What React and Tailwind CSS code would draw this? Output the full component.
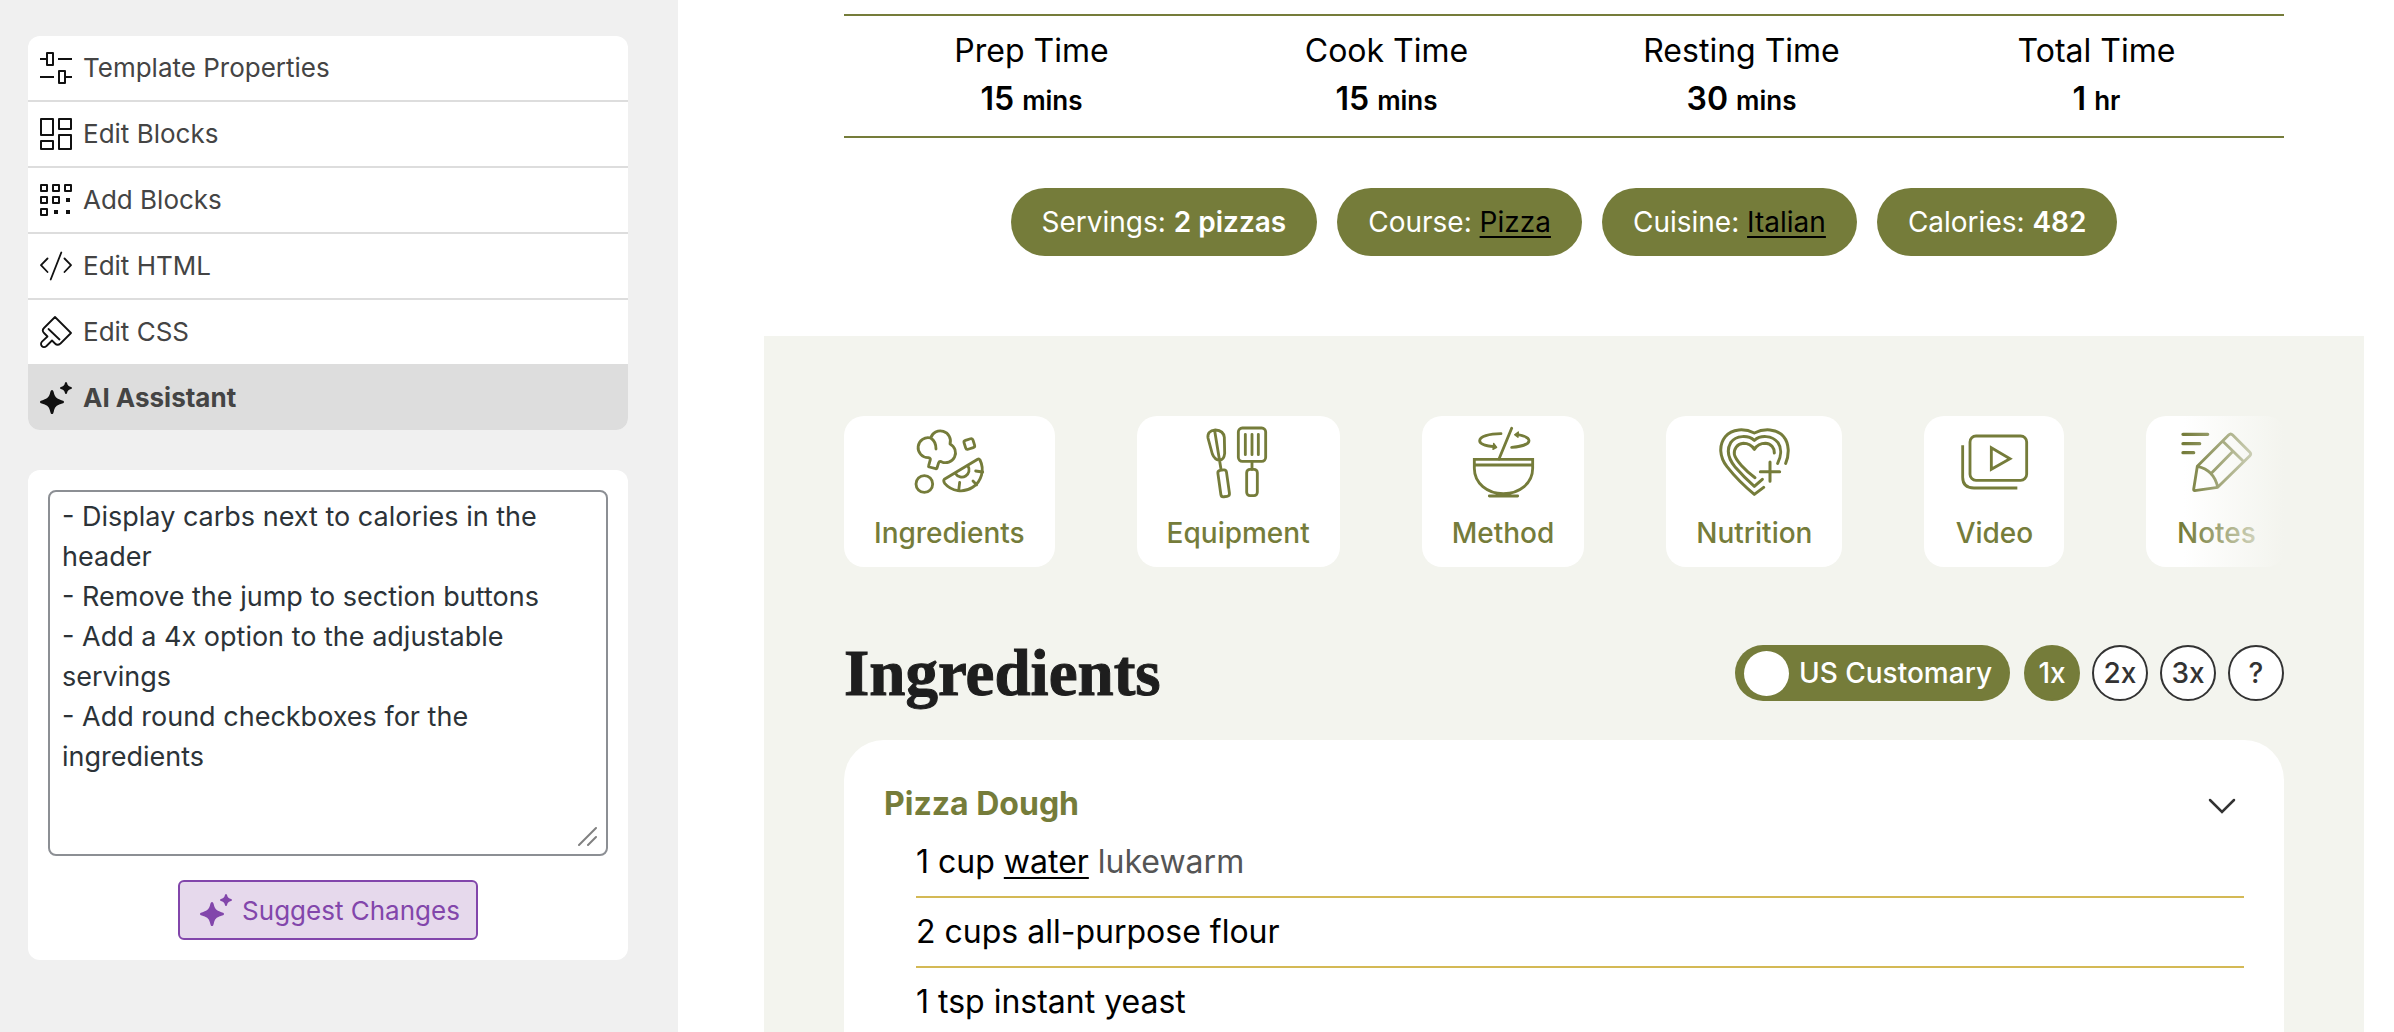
import React, { useState } from 'react';

const SparkleIcon = () => (
  <svg className="h-8 w-8 shrink-0" viewBox="0 0 32 32" fill="currentColor" aria-hidden="true">
    <path d="M12 8c1 0 1.4 1 1.8 2.600c1 4.200 2.400 6 7 7.400c2 .5 3.200 1 3.200 2s-1.200 1.500-3.200 2c-4.600 1.400-6 3.200-7 7.400c-.4 1.600-.8 2.600-1.800 2.600s-1.400-1-1.800-2.600c-1-4.200-2.400-6-7-7.400c-2-.5-3.200-1-3.200-2s1.200-1.500 3.200-2c4.600-1.400 6-3.200 7-7.400C10.600 9 11 8 12 8z" />
    <path d="M26 0c.7 0 1 .8 1.200 1.600c.5 1.800 1.200 2.600 3.200 3.200c.8.2 1.600.5 1.600 1.200s-.8 1-1.600 1.200c-2 .6-2.700 1.400-3.200 3.200c-.2.8-.5 1.600-1.200 1.600s-1-.8-1.200-1.600c-.5-1.800-1.200-2.600-3.200-3.200c-.8-.2-1.600-.5-1.600-1.200s.8-1 1.600-1.200c2-.6 2.700-1.400 3.200-3.200C25 .8 25.300 0 26 0z" />
  </svg>
);

const MenuIcon = ({ children }) => (
  <svg
    className="h-8 w-8 shrink-0"
    viewBox="0 0 32 32"
    fill="none"
    stroke="currentColor"
    strokeWidth="2"
    strokeLinejoin="round"
    aria-hidden="true"
  >
    {children}
  </svg>
);

const menuItems = [
  {
    label: 'Template Properties',
    icon: (
      <MenuIcon>
        <rect x="7" y="1" width="6" height="12" />
        <rect x="19" y="19" width="6" height="12" />
        <path d="M0 7h6M18 7h14M0 25h14M26 25h6" />
      </MenuIcon>
    ),
  },
  {
    label: 'Edit Blocks',
    icon: (
      <MenuIcon>
        <rect x="1" y="1" width="12" height="16" />
        <rect x="19" y="1" width="12" height="10" />
        <rect x="1" y="23" width="12" height="8" />
        <rect x="19" y="17" width="12" height="14" />
      </MenuIcon>
    ),
  },
  {
    label: 'Add Blocks',
    icon: (
      <MenuIcon>
        <path d="M1 1h6v6H1zM13 1h6v6h-6zM25 1h6v6h-6zM1 13h6v6H1zM13 13h6v6h-6zM1 25h6v6H1z" />
        <path d="M26 14h4v4h-4zM14 26h4v4h-4zM26 26h4v4h-4z" fill="currentColor" stroke="none" />
      </MenuIcon>
    ),
  },
  {
    label: 'Edit HTML',
    icon: (
      <MenuIcon>
        <path d="M21.300 2.500L10.700 29.500M7.500 8.500L1 15.200L7.500 22M24.500 8.500L31 15.200L24.500 22" strokeWidth="1.800" strokeLinecap="round" />
      </MenuIcon>
    ),
  },
  {
    label: 'Edit CSS',
    icon: (
      <MenuIcon>
        <path
          d="M15 1L31 17L20.500 27.500Q17.500 30 15 27.500L12 24.500L6.500 30Q4 32 2 30.300Q0 28 2 25.700L7.500 20.500L4 17Q1.500 14.500 4 12z M8.500 13L19.500 23.500"
          strokeWidth="1.800"
          strokeLinecap="round"
        />
      </MenuIcon>
    ),
  },
  { label: 'AI Assistant', icon: <SparkleIcon /> },
];

const times = [
  { label: 'Prep Time', value: '15', unit: 'mins' },
  { label: 'Cook Time', value: '15', unit: 'mins' },
  { label: 'Resting Time', value: '30', unit: 'mins' },
  { label: 'Total Time', value: '1', unit: 'hr' },
];

const tags = [
  { label: 'Servings:', value: '2 pizzas' },
  { label: 'Course:', value: 'Pizza', link: true },
  { label: 'Cuisine:', value: 'Italian', link: true },
  { label: 'Calories:', value: '482' },
];

const JumpIcon = ({ viewBox, children }) => (
  <svg
    className="h-20 w-20"
    viewBox={viewBox}
    fill="none"
    stroke="currentColor"
    strokeWidth="8.500"
    strokeLinecap="round"
    strokeLinejoin="round"
    aria-hidden="true"
  >
    {children}
  </svg>
);

const sections = [
  {
    label: 'Ingredients',
    icon: (
      <JumpIcon viewBox="30 9 240 240">
        <path d="M88 113A30 30 0 1 1 95 54A29 29 0 0 1 153 72A29 29 0 1 1 127 125q-6-2-8 3l-5 16q-1 3-4 2l-19-5q-3-1-2-4l5-18q1-4-6-6M95 54Q111 64 111 87" />
        <rect x="197" y="58" width="28" height="28" rx="6" transform="rotate(-17 211 72)" />
        <circle cx="76" cy="192" r="25" />
        <path d="M136 178L236 118q5-3 7 2A64 64 0 0 1 137 190q-5-8-1-12z" />
        <path d="M170 161A20 20 0 0 0 207 138M182 187L179 212M222 183L233 194M230 153L251 156" />
      </JumpIcon>
    ),
  },
  {
    label: 'Equipment',
    icon: (
      <JumpIcon viewBox="898 9 240 240">
        <path d="M928 54Q925 32 950 30Q975 32 977 52L978 100Q976 120 962 121Q948 119 941 102ZM948 32L967 148" />
        <rect x="962" y="150" width="26" height="80" rx="8" transform="rotate(-8 975 190)" />
        <rect x="1019" y="24" width="82" height="100" rx="12" />
        <path d="M1040 43V104M1060 43V104M1079 43V104M1060 124V148" />
        <rect x="1044" y="148" width="32" height="79" rx="10" />
      </JumpIcon>
    ),
  },
  {
    label: 'Method',
    icon: (
      <JumpIcon viewBox="42 9 240 240">
        <path d="M76 118H251V145C251 190 212 221 163 221C115 221 76 190 76 145ZM76 135H251M121 228H206" strokeLinejoin="miter" />
        <path d="M188 25L150 117M156 41C120 41 92 50 92 62C92 73 115 78 136 80M188 82C215 80 240 73 240 62C240 52 224 47 206 44" />
        <path d="M134 70L143 82L132 88zM197 44L208 36L207 52z" fill="currentColor" strokeWidth="4" />
      </JumpIcon>
    ),
  },
  {
    label: 'Nutrition',
    icon: (
      <JumpIcon viewBox="796 9 240 240">
        <path d="M1011 130C1022 105 1022 70 1005 50C985 25 945 25 917 39C889 25 850 25 830 50C810 75 812 110 835 140C860 172 895 205 917 223L945 202" strokeWidth="9" />
        <path d="M987 130C997 110 1000 85 988 68C970 45 935 45 917 61C899 45 862 45 846 68C832 92 838 115 860 142C878 163 900 184 917 199L941 178" strokeWidth="9" />
        <path d="M977 99C978 85 968 71 950 70C935 70 925 76 917 88C909 76 899 70 884 70C865 71 855 88 857 103C860 120 890 152 919 173" strokeWidth="9" />
        <path d="M964 126V184M935 155H993" strokeWidth="9" />
      </JumpIcon>
    ),
  },
  {
    label: 'Video',
    icon: (
      <JumpIcon viewBox="42 9 240 240">
        <rect x="90" y="48" width="170" height="133" rx="18" />
        <path d="M68 76V172Q68 204 102 204H232M154 83V148L210 116Z" strokeLinecap="butt" strokeLinejoin="miter" />
      </JumpIcon>
    ),
  },
  {
    label: 'Notes',
    icon: (
      <JumpIcon viewBox="700 9 240 240">
        <path d="M721 43H795M721 71H771M721 98H753" strokeWidth="10" />
        <path d="M764 139L858 45q6-6 12 0L921 96q6 6 0 12L825 202L756 212q-3 0-3-4ZM842 65L902 124M868 97L806 160M764 139Q815 150 825 202" />
      </JumpIcon>
    ),
  },
];

const servings = ['1x', '2x', '3x', '?'];

const Sidebar = () => {
  const [active, setActive] = useState('AI Assistant');
  const [prompt, setPrompt] = useState(
    '- Display carbs next to calories in the header\n- Remove the jump to section buttons\n- Add a 4x option to the adjustable servings\n- Add round checkboxes for the ingredients'
  );

  return (
    <aside className="w-[678px] shrink-0 bg-[#f0f0f0] pt-9 pr-[50px] pl-7">
      <nav className="overflow-hidden rounded-xl bg-white">
        {menuItems.map((item, i) => (
          <button
            key={item.label}
            type="button"
            onClick={() => setActive(item.label)}
            className={`flex w-full items-center gap-[11px] px-3 text-left text-[26px] leading-[64px] ${
              i > 0 ? 'border-t-2 border-[#ddd]' : ''
            } ${active === item.label ? 'bg-[#ddd] font-bold' : ''}`}
          >
            <span className="text-[#111]">{item.icon}</span>
            <span className="text-[#444]">{item.label}</span>
          </button>
        ))}
      </nav>

      <div className="mt-10 rounded-xl bg-white p-5">
        <div className="relative">
          <textarea
            aria-label="AI Assistant"
            value={prompt}
            onChange={(e) => setPrompt(e.target.value)}
            className="block h-[366px] w-full resize-none rounded-lg border-2 border-[#8c8f94] bg-white px-3 py-[5px] text-[27px] leading-10 text-[#2c3338] outline-none"
          />
          <svg
            className="pointer-events-none absolute right-2.5 bottom-2.5 h-5 w-5"
            viewBox="0 0 20 20"
            stroke="#808080"
            strokeWidth="2"
            strokeLinecap="round"
            aria-hidden="true"
          >
            <path d="M1 19L18 2M10 19L18 11" />
          </svg>
        </div>
        <button
          type="button"
          className="mx-auto mt-6 flex h-[60px] items-center gap-2.5 rounded-md border-2 border-[#8246ab] bg-[#e6d9ec] pr-4 pl-5 text-[26px] text-[#8246ab]"
        >
          <SparkleIcon />
          Suggest Changes
        </button>
      </div>
    </aside>
  );
};

const RecipeHeader = () => (
  <header className="px-20 pt-[14px] text-black">
    <dl className="flex border-y-2 border-[#757c3a] px-2.5 pt-[11px] pb-[13px] text-center text-[32px] leading-[48px]">
      {times.map((time) => (
        <div key={time.label} className="flex-1">
          <dt>{time.label}</dt>
          <dd className="font-semibold">
            {time.value} <span className="text-[26px] leading-none">{time.unit}</span>
          </dd>
        </div>
      ))}
    </dl>
    <div className="mt-[50px] flex justify-center gap-5">
      {tags.map((tag) => (
        <div key={tag.label} className="rounded-full bg-[#757c3a] px-[31px] text-[28px] leading-[68px] text-white">
          {tag.label}{' '}
          {tag.link ? (
            <a href="#" className="text-black underline decoration-2 underline-offset-4">{tag.value}</a>
          ) : (
            <span className="font-semibold">{tag.value}</span>
          )}
        </div>
      ))}
    </div>
  </header>
);

const JumpLinks = () => (
  <div className="relative">
    <nav className="flex gap-[82px] overflow-hidden">
      {sections.map((section) => (
        <a
          key={section.label}
          href="#"
          className="flex shrink-0 flex-col items-center rounded-[20px] bg-white px-[30px] pt-[7px] pb-3 text-[28px] font-medium text-[#757c3a]"
        >
          {section.icon}
          <span className="mt-2 leading-[44px]">{section.label}</span>
        </a>
      ))}
    </nav>
    <div className="pointer-events-none absolute inset-y-0 right-0 w-[100px] bg-linear-to-r from-[#f3f4ee]/0 to-[#f3f4ee]" />
  </div>
);

const Ingredients = () => {
  const [serving, setServing] = useState('1x');
  const [metric, setMetric] = useState(false);

  return (
    <section>
      <div className="mt-[66px] flex items-center justify-between pt-3 pb-[39px]">
        <h2 className="font-['Liberation_Serif',serif] text-[65px] leading-[56px] font-bold text-[#1e1e1e] [-webkit-text-stroke:1px_#1e1e1e]">
          Ingredients
        </h2>
        <div className="flex text-[28px] font-medium">
          <button
            type="button"
            role="switch"
            aria-checked={metric}
            onClick={() => setMetric(!metric)}
            className="mr-[14px] flex h-14 items-center gap-2.5 rounded-full bg-[#757c3a] pr-[18px] pl-[9px] text-white"
          >
            <span className="h-[45px] w-[45px] rounded-full bg-white" />
            US Customary
          </button>
          <div className="flex gap-3">
            {servings.map((s) => (
              <button
                key={s}
                type="button"
                onClick={() => setServing(s)}
                className={`h-14 w-14 rounded-full border-2 ${
                  serving === s ? 'border-[#757c3a] bg-[#757c3a] text-white' : 'border-[#333] bg-white text-[#333]'
                }`}
              >
                {s}
              </button>
            ))}
          </div>
        </div>
      </div>

      <div className="rounded-t-[40px] bg-white p-10 text-[32px] leading-[48px] text-black">
        <div className="flex items-center justify-between">
          <h3 className="font-bold text-[#757c3a]">Pizza Dough</h3>
          <button type="button" aria-label="Toggle Pizza Dough" className="px-2 pt-1">
            <svg className="h-4 w-7" viewBox="0 0 28 16" fill="none" stroke="#333" strokeWidth="2.500" strokeLinecap="round" aria-hidden="true">
              <path d="M2 2L14 14L26 2" />
            </svg>
          </button>
        </div>
        <ul className="pl-8">
          <li className="border-b-2 border-[#d4b955] py-2.5">
            1 cup <a href="#" className="underline decoration-2 underline-offset-4">water</a>{' '}
            <span className="text-[#555]">lukewarm</span>
          </li>
          <li className="border-b-2 border-[#d4b955] py-2.5">2 cups all-purpose flour</li>
          <li className="py-2.5">1 tsp instant yeast</li>
        </ul>
      </div>
    </section>
  );
};

const App = () => (
  <div className="flex h-screen overflow-hidden bg-white font-['Inter',sans-serif]">
    <Sidebar />
    <main className="min-w-0 flex-1 pr-[30px] pl-[86px]">
      <RecipeHeader />
      <div className="mt-20 bg-[#f3f4ee] px-20 pt-20">
        <JumpLinks />
        <Ingredients />
      </div>
    </main>
  </div>
);

export default App;
